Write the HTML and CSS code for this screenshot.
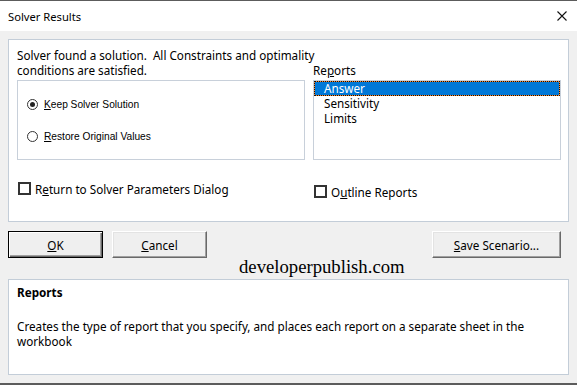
FILE: index.html
```html
<!DOCTYPE html>
<html lang="en">
<head>
    <meta charset="UTF-8">
    <meta name="viewport" content="width=device-width, initial-scale=1.0">
    <title>Solver Results</title>
    <link rel="stylesheet" href="styles.css">
</head>
<body>
    <div class="window">
        <div class="titlebar">
            <span class="title">Solver Results</span>
            <svg class="close" width="10" height="10" viewBox="0 0 10 10">
                <path d="M0.5 0.5 L9.5 9.5 M9.5 0.5 L0.5 9.5" stroke="#111" stroke-width="1.1" fill="none"/>
            </svg>
        </div>
        <div class="content">
            <div class="panel main-panel">
                <div class="grid">
                    <div class="message">Solver found a solution.&nbsp; All Constraints and optimality<br>conditions are satisfied.</div>
                    <div class="label">Re<u>p</u>orts</div>
                    <div class="groupbox">
                        <div class="radio-row"><span class="radio checked"></span><span><u>K</u>eep Solver Solution</span></div>
                        <div class="radio-row"><span class="radio"></span><span><u>R</u>estore Original Values</span></div>
                    </div>
                    <ul class="listbox">
                        <li class="selected">Answer</li>
                        <li>Sensitivity</li>
                        <li>Limits</li>
                    </ul>
                    <div class="check-row"><span class="checkbox"></span>R<u>e</u>turn to Solver Parameters Dialog</div>
                    <div class="check-row outline"><span class="checkbox"></span>O<u>u</u>tline Reports</div>
                </div>
            </div>
            <div class="buttons">
                <button class="btn default"><u>O</u>K</button>
                <button class="btn cancel"><u>C</u>ancel</button>
                <button class="btn wide"><u>S</u>ave Scenario...</button>
            </div>
            <div class="watermark">developerpublish.com</div>
            <div class="panel info">
                <div class="info-title">Reports</div>
                <p class="info-text">Creates the type of report that you specify, and places each report on a separate sheet in the<br>workbook</p>
            </div>
        </div>
    </div>
</body>
</html>
```

FILE: styles.css
```css
body {
    margin: 0;
    font-family: "Noto Sans", "Open Sans", sans-serif;
    font-size: 11.7px;
    color: #000;
}
.window {
    width: 577px;
    height: 385px;
    box-sizing: border-box;
    border-top: 1px solid #5c5c5c;
    border-bottom: 2px solid #5c5c5c;
    background-color: #f0f0f0;
    display: flex;
    flex-direction: column;
}
.titlebar {
    height: 30px;
    background-color: #fff;
    display: flex;
    align-items: center;
    justify-content: space-between;
    padding: 0 10px 0 8px;
    font-size: 11.2px;
}
.close {
    display: block;
}
.content {
    padding: 8px 8px 0;
}
.panel {
    background-color: #fff;
    border: 1px solid #c3cdd8;
    box-sizing: border-box;
}
.main-panel {
    height: 183px;
    padding: 8px 7px 0 8px;
}
.grid {
    display: grid;
    grid-template-columns: 288px 248px;
    grid-template-rows: 30px 80px auto;
    column-gap: 8px;
    row-gap: 2px;
}
.message {
    white-space: nowrap;
    line-height: 15px;
}
.label {
    align-self: end;
    line-height: 15px;
}
.groupbox {
    border: 1px solid #c8d0da;
    padding: 15px 0 0 9px;
    display: flex;
    flex-direction: column;
    gap: 16px;
}
.radio-row {
    height: 16px;
    display: flex;
    align-items: center;
    font-family: "Liberation Sans", Arial, sans-serif;
    font-size: 10.2px;
}
.radio {
    width: 11px;
    height: 11px;
    box-sizing: border-box;
    border: 1.5px solid #333;
    border-radius: 50%;
    margin-right: 6px;
    display: flex;
    align-items: center;
    justify-content: center;
}
.radio.checked::after {
    content: "";
    width: 5px;
    height: 5px;
    border-radius: 50%;
    background-color: #222;
}
.listbox {
    border: 1px solid #c8d0da;
    margin: 0;
    padding: 0;
    list-style: none;
}
.listbox li {
    height: 15px;
    line-height: 15px;
    padding-left: 10px;
}
.listbox .selected {
    box-sizing: border-box;
    padding-left: 9px;
    line-height: 13px;
    color: #fff;
    border: 1px dotted #111;
    background: linear-gradient(#0078d7, #0078d7) padding-box, #ff8728 border-box;
}
.check-row {
    margin-top: 19px;
    height: 15px;
    display: flex;
    align-items: center;
}
.check-row.outline {
    margin-top: 22px;
}
.checkbox {
    width: 13px;
    height: 13px;
    box-sizing: border-box;
    border: 2px solid #333;
    margin: 0 4px 0 1px;
}
.buttons {
    display: flex;
    margin-top: 9px;
    height: 27px;
}
.btn {
    font-family: inherit;
    font-size: 11.7px;
    color: #000;
    height: 27px;
    width: 95px;
    padding: 0;
    background-color: #efefef;
    border: 1px solid;
    border-color: #fff #696969 #696969 #fff;
    box-shadow: inset -1px -1px #a0a0a0, inset 1px 1px #e3e3e3;
}
.btn.default {
    border: 1px solid #000;
    box-shadow: inset 1px 1px #fff, inset -1px -1px #696969, inset -2px -2px #a0a0a0;
}
.btn.cancel {
    margin-left: 9px;
}
.btn.wide {
    width: 129px;
    margin-left: auto;
    margin-right: 8px;
}
.watermark {
    height: 21px;
    line-height: 17px;
    padding-left: 231px;
    font-family: "Liberation Serif", "Times New Roman", serif;
    font-size: 18.7px;
}
.info {
    height: 96px;
    padding: 5px 8px 0;
}
.info-title {
    font-weight: bold;
    line-height: 15px;
}
.info-text {
    margin: 19px 0 0;
    line-height: 15px;
    white-space: nowrap;
}
```
